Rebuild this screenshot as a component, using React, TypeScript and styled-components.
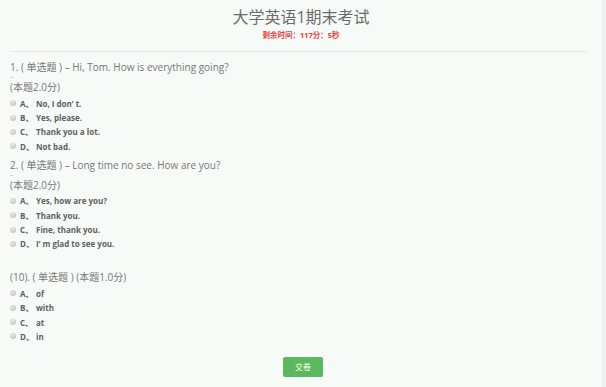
import styled, { createGlobalStyle } from "styled-components";

const GlobalStyle = createGlobalStyle`
  html, body {
    margin: 0;
    padding: 0;
    background: #f6fbf8;
  }
  body {
    font-family: "Open Sans", "Noto Sans CJK SC", sans-serif;
    color: #666;
  }
`;

const questions = [
  {
    no: "1.",
    stem: "Hi, Tom. How is everything going?",
    score: "2.0",
    options: ["No, I don’ t.", "Yes, please.", "Thank you a lot.", "Not bad."],
  },
  {
    no: "2.",
    stem: "Long time no see. How are you?",
    score: "2.0",
    options: [
      "Yes, how are you?",
      "Thank you.",
      "Fine, thank you.",
      "I’ m glad to see you.",
    ],
  },
];

const blank = {
  no: "(10).",
  score: "1.0",
  options: ["of", "with", "at", "in"],
};

const letters = ["A", "B", "C", "D"];

export default function App() {
  return (
    <>
      <GlobalStyle />
      <StyledPage>
        <StyledMain>
          <StyledHeader>
            <StyledTitle>大学英语1期末考试</StyledTitle>
            <StyledTimer>剩余时间：117分：5秒</StyledTimer>
          </StyledHeader>
          <StyledDivider />
          <StyledList>
            {questions.map((q) => (
              <StyledQuestion key={q.no}>
                <StyledStem>
                  {q.no} ( 单选题 ) – {q.stem}
                </StyledStem>
                <StyledDash>–</StyledDash>
                <StyledStem>(本题{q.score}分)</StyledStem>
                <Options items={q.options} />
              </StyledQuestion>
            ))}
            <StyledQuestion $gap={19}>
              <StyledStem>
                {blank.no} ( 单选题 ) (本题{blank.score}分)
              </StyledStem>
              <Options items={blank.options} />
            </StyledQuestion>
          </StyledList>
          <StyledFooter>
            <StyledSubmit>交卷</StyledSubmit>
          </StyledFooter>
        </StyledMain>
        <StyledScrollbar />
      </StyledPage>
    </>
  );
}

function Options({ items }: { items: string[] }) {
  return (
    <StyledOptions>
      {items.map((text, i) => (
        <StyledOption key={i}>
          <StyledRadio />
          <StyledLetter>{letters[i]}、</StyledLetter>
          <span>{text}</span>
        </StyledOption>
      ))}
    </StyledOptions>
  );
}

const StyledPage = styled.div`
  display: flex;
  width: 606px;
  height: 387px;
  overflow: hidden;
`;

const StyledMain = styled.div`
  flex: 1;
  padding: 0 10px;
`;

const StyledScrollbar = styled.div`
  width: 4px;
  background: #edf1ef;
`;

const StyledHeader = styled.div`
  display: flex;
  flex-direction: column;
  align-items: center;
  padding-top: 6px;
`;

const StyledTitle = styled.h1`
  margin: 0;
  font-size: 16px;
  line-height: 22px;
  font-weight: normal;
  color: #6b6b6b;
`;

const StyledTimer = styled.div`
  font-size: 7.5px;
  line-height: 14px;
  font-weight: bold;
  color: #f03c3c;
`;

const StyledDivider = styled.div`
  height: 1px;
  margin-top: 9px;
  margin-right: 4px;
  background: #e6e9e7;
`;

const StyledList = styled.div`
  padding-top: 8px;
`;

const StyledQuestion = styled.div<{ $gap?: number }>`
  margin-top: ${(p) => p.$gap ?? 4}px;
  &:first-child {
    margin-top: 0;
  }
`;

const StyledStem = styled.div`
  font-size: 10px;
  line-height: 14px;
  color: #777;
`;

const StyledDash = styled.div`
  font-size: 6px;
  line-height: 6px;
  color: #888;
`;

const StyledOptions = styled.div`
  margin-top: 2px;
`;

const StyledOption = styled.div`
  display: flex;
  align-items: center;
  height: 14.4px;
  font-size: 8px;
  font-weight: bold;
  color: #606060;
`;

const StyledRadio = styled.span`
  width: 6px;
  height: 6px;
  border-radius: 50%;
  background: radial-gradient(circle at 40% 35%, #e8e8e8, #b8b8b8);
  margin-right: 4px;
`;

const StyledLetter = styled.span`
  width: 16px;
`;

const StyledFooter = styled.div`
  display: flex;
  justify-content: center;
  padding-top: 13px;
`;

const StyledSubmit = styled.button`
  width: 40px;
  height: 20px;
  border: none;
  border-radius: 2px;
  background: #5cb85c;
  color: #fff;
  font-family: "Noto Sans CJK SC", sans-serif;
  font-size: 8px;
  padding: 0;
  margin-left: 4px;
`;
